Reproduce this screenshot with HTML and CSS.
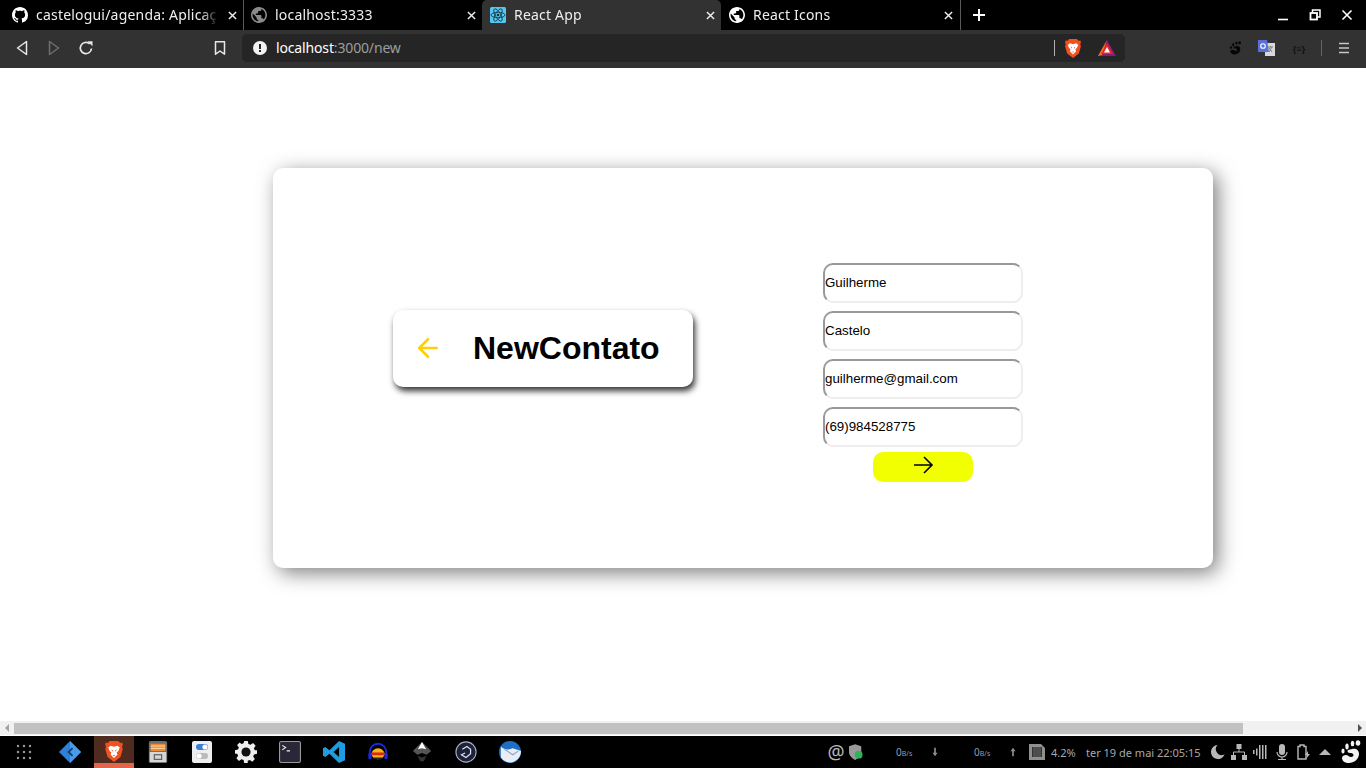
FILE: index.html
```html
<!DOCTYPE html>
<html lang="pt-BR">
<head>
  <meta charset="UTF-8" />
  <meta name="viewport" content="width=device-width, initial-scale=1.0" />
  <title>React App</title>
  <link rel="stylesheet" href="styles.css">
</head>
<body>
  <svg class="defs" width="0" height="0" aria-hidden="true">
    <symbol id="ic-globe" viewBox="2 2 20 20"><path fill="currentColor" d="M12 2C6.48 2 2 6.48 2 12s4.48 10 10 10 10-4.48 10-10S17.52 2 12 2zm-1 17.93c-3.95-.49-7-3.85-7-7.93 0-.62.08-1.21.21-1.79L9 15v1c0 1.1.9 2 2 2v1.93zm6.9-2.54c-.26-.81-1-1.39-1.9-1.39h-1v-3c0-.55-.45-1-1-1H8v-2h2c.55 0 1-.45 1-1V7h2c1.1 0 2-.9 2-2v-.41c2.93 1.19 5 4.06 5 7.41 0 2.08-.8 3.97-2.1 5.39z"/></symbol>
    <symbol id="ic-close" viewBox="0 0 10 10"><path d="M1 1l8 8M9 1l-8 8" stroke="currentColor" stroke-width="1.6" fill="none"/></symbol>
    <symbol id="ic-brave" viewBox="0 0 20 24"><path fill="#f1501f" d="M5 0h10l2 2.200 2.400-.4L20 4l-.8 3 .8 2-2.600 9.400L10 24l-7.400-5.600L0 9l.8-2L0 4l.6-2.200L3 2.200z"/><path fill="#fff" d="M6 5.500l4 1 4-1 2.500 2-1.500 4-2 1.500 1 2.500-4 4-4-4 1-2.500-2-1.500-1.500-4z"/><path fill="#f1501f" d="M7 9.500l2 1.500-1 1zM13 9.500l-2 1.500 1 1zM8.500 16h3L10 17.500z"/></symbol>
    <symbol id="ic-foot" viewBox="0 0 24 24"><path fill="currentColor" d="M14 9c4-1 7 1 7 5 0 5-5 9-10 9-4 0-7-2-7-5 0-2 2-3 4-3 2 0 3 2 5 2 1.500 0 2.500-1 2.500-2 0-1.500-2-2-3.500-2-1.500 0-2.500-1-2.500-2 0-1 2-1.500 4.500-2z"/><ellipse fill="currentColor" cx="5" cy="11" rx="1.600" ry="2.600"/><ellipse fill="currentColor" cx="9" cy="6.500" rx="1.700" ry="2.900"/><ellipse fill="currentColor" cx="14.500" cy="3.500" rx="1.800" ry="2.800"/><ellipse fill="currentColor" cx="20" cy="3" rx="2.300" ry="2.700"/></symbol>
  </svg>

  <header class="tabstrip">
    <div class="tab">
      <svg class="favicon" viewBox="0 0 16 16"><path fill="#fff" d="M8 0C3.58 0 0 3.58 0 8c0 3.54 2.29 6.53 5.47 7.59.4.07.55-.17.55-.38 0-.19-.01-.82-.01-1.490-2.010.37-2.530-.49-2.690-.94-.09-.23-.48-.94-.82-1.130-.28-.15-.68-.52-.01-.53.63-.01 1.080.58 1.230.82.72 1.210 1.870.87 2.330.66.07-.52.28-.87.51-1.070-1.780-.2-3.640-.89-3.640-3.950 0-.87.31-1.590.82-2.150-.08-.2-.36-1.020.08-2.120 0 0 .67-.21 2.200.82.64-.18 1.320-.27 2-.27.68 0 1.360.09 2 .27 1.530-1.040 2.200-.82 2.200-.82.44 1.100.16 1.920.08 2.120.51.56.82 1.270.82 2.150 0 3.070-1.870 3.750-3.650 3.950.29.25.54.73.54 1.480 0 1.070-.01 1.930-.01 2.200 0 .21.15.46.55.38A8.013 8.013 0 0016 8c0-4.420-3.580-8-8-8z"/></svg>
      <span class="tab-title">castelogui/agenda: Aplicaç</span>
      <svg class="tab-close"><use href="#ic-close"/></svg>
    </div>
    <div class="tab">
      <svg class="favicon favicon-dim"><use href="#ic-globe"/></svg>
      <span class="tab-title">localhost:3333</span>
      <svg class="tab-close"><use href="#ic-close"/></svg>
    </div>
    <div class="tab tab-active">
      <svg class="favicon" viewBox="0 0 16 16">
        <rect width="16" height="16" rx="1.500" fill="#55c8f2"/>
        <g fill="none" stroke="#12323f" stroke-width=".8">
          <ellipse cx="8" cy="8" rx="7" ry="2.700"/>
          <ellipse cx="8" cy="8" rx="7" ry="2.700" transform="rotate(60 8 8)"/>
          <ellipse cx="8" cy="8" rx="7" ry="2.700" transform="rotate(120 8 8)"/>
        </g>
        <circle cx="8" cy="8" r="1.300" fill="#12323f"/>
      </svg>
      <span class="tab-title">React App</span>
      <svg class="tab-close"><use href="#ic-close"/></svg>
    </div>
    <div class="tab">
      <svg class="favicon"><use href="#ic-globe"/></svg>
      <span class="tab-title">React Icons</span>
      <svg class="tab-close"><use href="#ic-close"/></svg>
    </div>
    <svg class="new-tab" viewBox="0 0 12 12"><path d="M6 0v12M0 6h12" stroke="#fff" stroke-width="2"/></svg>
    <div class="win-controls">
      <svg viewBox="0 0 12 12"><path d="M1 10.500h10" stroke="#fff" stroke-width="1.600"/></svg>
      <svg viewBox="0 0 12 12"><path d="M3.500 3.500V1h7.500v7H8.500" fill="none" stroke="#fff" stroke-width="1.500"/><rect x="1.500" y="4" width="6.500" height="6.500" fill="none" stroke="#fff" stroke-width="1.800"/></svg>
      <svg viewBox="0 0 12 12"><path d="M1.500 1.500l9 9M10.500 1.500l-9 9" stroke="#fff" stroke-width="1.600"/></svg>
    </div>
  </header>

  <nav class="toolbar">
    <button class="tool-btn"><svg viewBox="0 0 16 16"><path d="M12.500 1.500v13L3.500 8z" fill="none" stroke="#e8e8e8" stroke-width="1.500" stroke-linejoin="round"/></svg></button>
    <button class="tool-btn"><svg viewBox="0 0 16 16"><path d="M3.500 1.500v13L12.500 8z" fill="none" stroke="#6f6f6f" stroke-width="1.500" stroke-linejoin="round"/></svg></button>
    <button class="tool-btn"><svg viewBox="0 0 16 16"><path d="M13.500 8.500A5.600 5.600 0 1 1 11.600 3.800" fill="none" stroke="#e8e8e8" stroke-width="1.700"/><path d="M9.500 1.200h5v5z" fill="#e8e8e8"/></svg></button>
    <button class="tool-btn bookmark-btn"><svg viewBox="0 0 16 16"><path d="M3.500 1.800h9v12.400L8 11l-4.500 3.200z" fill="none" stroke="#e8e8e8" stroke-width="1.500" stroke-linejoin="round"/></svg></button>
    <div class="address-bar">
      <svg class="info-icon" viewBox="0 0 14 14"><circle cx="7" cy="7" r="7" fill="#f2f2f2"/><rect x="6" y="3" width="2" height="5" fill="#252525"/><rect x="6" y="9" width="2" height="2" fill="#252525"/></svg>
      <span class="url"><span class="url-host">localhost</span>:3000/new</span>
      <span class="bar-sep"></span>
      <svg class="shield-icon"><use href="#ic-brave"/></svg>
      <svg class="bat-icon" viewBox="0 0 18 16"><path d="M9 0l9 16H0z" fill="#8a1a78"/><path d="M9 0L0 16l4-1z" fill="#f5701f"/><path d="M9 3.500L15 14H3z" fill="#e8291f"/><path d="M9 7l3 5.500H6z" fill="#fff"/></svg>
    </div>
    <div class="extensions">
      <svg class="ext-foot"><use href="#ic-foot"/></svg>
      <svg class="ext-translate" viewBox="0 0 17 16"><rect x="7" y="3" width="10" height="13" fill="#d8d8d8"/><path d="M10 7h5M12.500 6v1M11 12l3-5M11 8l3 4" stroke="#777" stroke-width=".9" fill="none"/><path d="M0 0h9l2 12H0z" fill="#5b6fd8"/><circle cx="5" cy="6" r="2.300" fill="none" stroke="#fff" stroke-width="1.100"/></svg>
      <span class="ext-var">{≡}</span>
      <span class="bar-sep bar-sep-light"></span>
      <svg class="menu-icon" viewBox="0 0 12 12"><path d="M1 1.500h10M1 6h10M1 10.500h10" stroke="#c8c8c8" stroke-width="1.700"/></svg>
    </div>
  </nav>

  <main class="viewport">
    <section class="card">
      <div class="title-box">
        <svg class="back-arrow" viewBox="0 0 24 24"><path d="M19 12H5M12 19l-7-7 7-7"/></svg>
        <h1 class="page-title">NewContato</h1>
      </div>
      <form class="contact-form">
        <input class="field" type="text" value="Guilherme">
        <input class="field" type="text" value="Castelo">
        <input class="field" type="text" value="guilherme@gmail.com">
        <input class="field" type="text" value="(69)984528775">
        <button class="submit-btn" type="button"><svg viewBox="0 0 24 24"><path d="M3 12h18M13 4l8 8-8 8"/></svg></button>
      </form>
    </section>
  </main>

  <div class="scrollbar">
    <span class="scroll-btn scroll-left"></span>
    <div class="scroll-thumb"></div>
    <span class="scroll-btn scroll-right"></span>
  </div>

  <footer class="taskbar">
    <div class="dock">
      <svg class="dock-grid" viewBox="0 0 16 16" fill="#9a9a9a"><circle cx="2" cy="2" r="1.200"/><circle cx="8" cy="2" r="1.200"/><circle cx="14" cy="2" r="1.200"/><circle cx="2" cy="8" r="1.200"/><circle cx="8" cy="8" r="1.200"/><circle cx="14" cy="8" r="1.200"/><circle cx="2" cy="14" r="1.200"/><circle cx="8" cy="14" r="1.200"/><circle cx="14" cy="14" r="1.200"/></svg>
      <div class="dock-item dock-item-gap"><svg viewBox="0 0 24 24"><path d="M12 0l12 12-12 12L0 12z" fill="#2f7fd6"/><path d="M12 0l12 12-12 12z" fill="#4a9bea"/><path d="M9 12l5-5 1.500 1.500L12 12l3.500 3.500L14 17z" fill="#12406f"/></svg></div>
      <div class="dock-item dock-active"><svg class="dock-brave"><use href="#ic-brave"/></svg></div>
      <div class="dock-item"><svg viewBox="0 0 20 24"><rect width="20" height="24" rx="2" fill="#6e6e6e"/><rect x="2" y="3" width="16" height="8" fill="#f08b35"/><path d="M2 5.500h16M2 8h16" stroke="#fbe0b8"/><rect x="1" y="12" width="18" height="11" fill="#d6d6d6"/><rect x="6" y="15" width="8" height="5" fill="none" stroke="#555" stroke-width="1.200"/></svg></div>
      <div class="dock-item"><svg viewBox="0 0 20 22"><rect width="20" height="22" rx="2" fill="#eee"/><rect x="4" y="3" width="12" height="6" rx="3" fill="#3a7fd6"/><circle cx="13" cy="6" r="2.600" fill="#fff"/><rect x="4" y="12" width="12" height="6" rx="3" fill="#bbb"/><circle cx="7" cy="15" r="2.600" fill="#fff"/></svg></div>
      <div class="dock-item"><svg viewBox="0 0 24 24"><path d="M10 0h4l.6 3.200 2.400 1 2.700-1.900 2.800 2.800-1.900 2.700 1 2.400L24 10v4l-3.200.6-1 2.400 1.900 2.700-2.800 2.800-2.700-1.900-2.400 1L14 24h-4l-.6-3.200-2.400-1-2.700 1.900-2.800-2.800 1.900-2.700-1-2.400L0 14v-4l3.200-.6 1-2.400-1.900-2.700 2.800-2.800L7 3.400l2.400-1z" fill="#eee"/><circle cx="12" cy="12" r="5" fill="#111"/></svg></div>
      <div class="dock-item"><svg viewBox="0 0 20 20"><rect x=".5" y=".5" width="19" height="19" rx="1.500" fill="#2a2838" stroke="#999"/><path d="M3 4l3 2-3 2M7 9h3" stroke="#eee" fill="none"/></svg></div>
      <div class="dock-item"><svg viewBox="0 0 24 24"><path d="M17.500 0L24 3v18l-6.500 3L7 14l-4.500 3.500L0 16V8l2.500-1.500L7 10zM17.500 6.500L11.500 12l6 5.500z" fill="#1f9ce0"/></svg></div>
      <div class="dock-item"><svg viewBox="0 0 24 24"><path d="M3 16V12a9 9 0 0 1 18 0v4" fill="none" stroke="#1a2ae0" stroke-width="2"/><rect x="1.500" y="13" width="3.500" height="7" rx="1.500" fill="#1a2ae0"/><rect x="19" y="13" width="3.500" height="7" rx="1.500" fill="#1a2ae0"/><ellipse cx="12" cy="14" rx="7" ry="6" fill="#f5b40f"/><path d="M5 14h14" stroke="#e2241f" stroke-width="3"/><path d="M7 19h10" stroke="#222" stroke-width="2"/></svg></div>
      <div class="dock-item"><svg viewBox="0 0 24 24"><path d="M12 1l10 10-5 4-5-2-5 2-5-4z" fill="#555"/><path d="M12 1l4.500 8L12 8 7.500 9z" fill="#fff"/><path d="M7 16l5 2 5-2-3 6h-4z" fill="#333"/></svg></div>
      <div class="dock-item"><svg viewBox="0 0 24 24"><circle cx="12" cy="12" r="11" fill="#1c2238" stroke="#aab0c8" stroke-width="1.200"/><path d="M8 9l5-3 4 3v5l-5 4-5-3 4-2" fill="none" stroke="#dfe3f2" stroke-width="1.300"/></svg></div>
      <div class="dock-item"><svg viewBox="0 0 24 24"><circle cx="12" cy="12" r="12" fill="#1e6fc4"/><path d="M2 6c4 4 9 4 13 2l9 3a12 12 0 0 1-22 7z" fill="#e9edf5"/><path d="M6 9l9 6 6-4" fill="none" stroke="#8aa4c8" stroke-width="1.200"/></svg></div>
    </div>
    <div class="tray">
      <span class="tray-at">@</span>
      <svg class="tray-shield" viewBox="0 0 16 18"><path d="M7 0l7 2.500V9c0 4-3 7-7 9-4-2-7-5-7-9V2.500z" fill="#9a9a9a"/><circle cx="11" cy="12" r="4.500" fill="#2fb457"/></svg>
      <span class="tray-speed tray-down">0<small>B/s</small></span>
      <svg class="tray-arrow tray-arrow-down" viewBox="0 0 8 12"><path d="M4 11L1 7h2V1h2v6h2z" fill="#8f8f8f"/></svg>
      <span class="tray-speed tray-up">0<small>B/s</small></span>
      <svg class="tray-arrow tray-arrow-up" viewBox="0 0 8 12"><path d="M4 1l3 4H5v6H3V5H1z" fill="#8f8f8f"/></svg>
      <svg class="tray-chip" viewBox="0 0 16 16"><path d="M0 0h12l4 4v12H0z" fill="#8f8f8f"/><rect x="3" y="3" width="10" height="10" fill="#333"/><path d="M5 3v10M7 3v10M9 3v10M11 3v10" stroke="#8f8f8f" stroke-width=".6"/></svg>
      <span class="tray-text tray-cpu">4.2%</span>
      <span class="tray-text tray-date">ter 19 de mai</span>
      <span class="tray-text tray-time">22:05:15</span>
      <svg class="tray-icon tray-moon" viewBox="0 0 16 16"><path d="M8.500 1a7 7 0 1 0 7 9.500A6 6 0 0 1 8.500 1z" fill="#b8b8b8"/></svg>
      <svg class="tray-icon tray-net" viewBox="0 0 16 16"><path d="M5.500 0h5v5h-5zM0 11h5v5H0zM11 11h5v5h-5z" fill="#b8b8b8"/><path d="M8 5v3M2.500 11V8h11v3" fill="none" stroke="#b8b8b8"/></svg>
      <svg class="tray-icon tray-vol" viewBox="0 0 16 16"><path d="M0 6h1.500v4H0zM3 4.500h1.500v7H3zM6 1h1.500v14H6zM9 1h1.500v14H9zM12 1h1.500v14H12z" fill="#b8b8b8"/></svg>
      <svg class="tray-mic" viewBox="0 0 14 16"><rect x="4" y="0" width="6" height="11" rx="3" fill="#b8b8b8"/><path d="M2 8a5 5 0 0 0 10 0M7 13v2M3 15.500h8" fill="none" stroke="#b8b8b8" stroke-width="1.200"/></svg>
      <svg class="tray-icon tray-batt" viewBox="0 0 16 16"><path d="M3 2.500h2V1h4v1.500h2V15H3z" fill="none" stroke="#b8b8b8" stroke-width="1.400"/><path d="M13 7l-3 4h2l-1 4 4-5h-2z" fill="#b8b8b8"/></svg>
      <svg class="tray-caret" viewBox="0 0 12 6"><path d="M6 0l6 6H0z" fill="#b8b8b8"/></svg>
      <svg class="tray-foot"><use href="#ic-foot"/></svg>
    </div>
  </footer>
</body>
</html>
```

FILE: styles.css
```css
* {
  box-sizing: border-box;
}

html, body {
  margin: 0;
  height: 768px;
  overflow: hidden;
}

body {
  display: flex;
  flex-direction: column;
  background-color: #fff;
  font-family: "Noto Sans", sans-serif;
}

.defs {
  position: absolute;
}

/* tabs */
.tabstrip {
  display: flex;
  align-items: stretch;
  flex: 0 0 30px;
  background-color: #000;
  color: #eee;
}

.tab {
  display: flex;
  align-items: center;
  width: 240px;
  padding: 0 6px 0 8px;
  border-right: 1px solid #5a5a5a;
  font-size: 14px;
}

.tab:nth-child(1) {
  width: 244px;
  padding-left: 12px;
}

.tab:nth-child(2) {
  width: 238px;
  padding-left: 7px;
  border-right: none;
}

.tab-active {
  width: 239px;
  background-color: #323232;
  border-right: none;
  border-radius: 5px 5px 0 0;
}

.favicon {
  flex: 0 0 16px;
  width: 16px;
  height: 16px;
  color: #fff;
}

.favicon-dim {
  color: #8a8a8a;
}

.tab-title {
  flex: 1;
  margin: 0 0 1px 8px;
  overflow: hidden;
  white-space: nowrap;
  letter-spacing: .2px;
  -webkit-mask-image: linear-gradient(to right, #000 165px, transparent 183px);
  mask-image: linear-gradient(to right, #000 165px, transparent 183px);
}

.tab-close {
  flex: 0 0 9px;
  width: 9px;
  height: 9px;
  color: #eee;
}

.tab:nth-child(4) .tab-close {
  margin-right: 1px;
}

.new-tab {
  width: 12px;
  height: 12px;
  margin: 9px 0 0 12px;
}

.win-controls {
  display: flex;
  align-items: center;
  gap: 20px;
  margin-left: auto;
  padding-right: 13px;
}

.win-controls svg {
  width: 12px;
  height: 12px;
}

/* toolbar */
.toolbar {
  display: flex;
  align-items: center;
  flex: 0 0 38px;
  padding: 0 6px 2px;
  background-color: #323232;
}

.tool-btn {
  display: flex;
  align-items: center;
  justify-content: center;
  width: 32px;
  height: 28px;
  padding: 0;
  border: none;
  background: none;
}

.tool-btn svg {
  width: 16px;
  height: 16px;
}

.bookmark-btn {
  margin-left: 102px;
}

.address-bar {
  display: flex;
  align-items: center;
  width: 883px;
  height: 28px;
  margin-left: 6px;
  padding: 0 9px 0 11px;
  border-radius: 5px;
  background-color: #252525;
}

.info-icon {
  width: 14px;
  height: 14px;
}

.url {
  flex: 1;
  margin: 0 0 1px 9px;
  font-size: 14px;
  letter-spacing: -.15px;
  color: #9d9d9d;
}

.url-host {
  color: #fff;
}

.bar-sep {
  width: 1px;
  height: 16px;
  background-color: #b0b0b0;
}

.shield-icon {
  width: 16px;
  height: 19px;
  margin-left: 10px;
}

.bat-icon {
  width: 18px;
  height: 16px;
  margin-left: 17px;
}

.extensions {
  display: flex;
  align-items: center;
  margin-left: auto;
}

.ext-foot {
  width: 14px;
  height: 14px;
  color: #050505;
  margin-right: 16px;
}

.ext-translate {
  width: 17px;
  height: 16px;
}

.ext-var {
  width: 32px;
  margin-left: 8px;
  text-align: center;
  font-size: 9px;
  font-weight: bold;
  color: #111;
}

.bar-sep-light {
  margin-left: 6px;
  background-color: #666;
}

.menu-icon {
  width: 12px;
  height: 12px;
  margin: 0 10px 0 16px;
}

/* page */
.viewport {
  flex: 1;
  min-height: 0;
  padding: 100px 0 0 273px;
  background-color: #fff;
}

.card {
  display: flex;
  align-items: flex-start;
  gap: 130px;
  width: 940px;
  height: 400px;
  padding: 95px 0 0 120px;
  border-radius: 10px;
  background-color: #fff;
  box-shadow: 5px 5px 20px rgba(0, 0, 0, .5);
}

.title-box {
  display: flex;
  align-items: center;
  width: 300px;
  height: 77px;
  margin-top: 47px;
  padding-left: 20px;
  border-radius: 10px;
  background-color: #fff;
  box-shadow: 2px 4px 6px rgba(0, 0, 0, .8);
}

.back-arrow {
  width: 30px;
  height: 30px;
  margin-bottom: 2px;
  fill: none;
  stroke: #ffd000;
  stroke-width: 2;
  stroke-linecap: round;
  stroke-linejoin: round;
}

.page-title {
  margin: 0 0 0 30px;
  font-family: "Liberation Sans", sans-serif;
  font-size: 32px;
  font-weight: bold;
  color: #000;
}

.contact-form {
  display: flex;
  flex-direction: column;
  align-items: center;
  gap: 8px;
  width: 200px;
}

.field {
  width: 200px;
  height: 40px;
  padding: 0 0 2px;
  border: 2px solid;
  border-color: #999 #eee #eee #999;
  border-radius: 10px;
  outline: none;
  background-color: #fff;
  font-family: "Liberation Sans", sans-serif;
  font-size: 13.333px;
  color: #000;
}

.submit-btn {
  display: flex;
  align-items: center;
  justify-content: center;
  width: 100px;
  height: 30px;
  margin-top: -3px;
  padding: 0 0 4px;
  border: none;
  border-radius: 10px;
  background-color: #f2ff00;
}

.submit-btn svg {
  width: 24px;
  height: 24px;
  fill: none;
  stroke: #000;
  stroke-width: 1.600;
}

/* scrollbar */
.scrollbar {
  display: flex;
  align-items: center;
  flex: 0 0 14px;
  background-color: #f1f1f1;
}

.scroll-btn {
  flex: 0 0 15px;
  height: 0;
  border-style: solid;
  border-color: transparent;
}

.scroll-left {
  width: 0;
  flex: 0 0 0;
  margin: 0 10px 0 5px;
  border-width: 4px 4px 4px 0;
  border-right-color: #a3a3a3;
}

.scroll-thumb {
  align-self: flex-start;
  width: 1229px;
  height: 11px;
  margin: 2px 0 0 -5px;
  background-color: #c1c1c1;
}

.scroll-right {
  width: 0;
  flex: 0 0 0;
  margin-left: auto;
  margin-right: 4px;
  border-width: 4px 0 4px 4px;
  border-left-color: #505050;
}

/* desktop bar */
.taskbar {
  display: flex;
  align-items: center;
  flex: 0 0 33px;
  border-top: 1px solid #fff;
  background-color: #000;
}

.dock {
  display: flex;
  align-items: center;
  height: 32px;
  padding-left: 2px;
}

.dock-grid {
  width: 16px;
  height: 16px;
  margin: 0 14px;
}

.dock-item {
  display: flex;
  align-items: center;
  justify-content: center;
  width: 44px;
  height: 32px;
}

.dock-item svg {
  width: 22px;
  height: 22px;
}

.dock-item-gap {
  margin-left: 2px;
}

.dock-active {
  width: 40px;
  margin: 0 2px;
  padding-top: 4px;
  border-bottom: 5px solid #e0654a;
  background-color: #4f2a1e;
}

.dock-item .dock-brave {
  width: 18px;
  height: 21px;
}

.tray {
  display: flex;
  align-items: center;
  height: 32px;
  margin-left: auto;
  padding-right: 4px;
  color: #a8a8a8;
  font-size: 11px;
}

.tray svg {
  flex: none;
}

.tray-at {
  width: 20px;
  font-size: 19px;
  line-height: 1;
  text-align: center;
  color: #b8b8b8;
}

.tray-shield {
  width: 14px;
  height: 16px;
  margin: 0 3px;
}

.tray-speed {
  width: 18px;
  font-size: 10px;
  color: #8f9bb5;
}

.tray-speed small {
  font-size: 7px;
}

.tray-down {
  margin-left: 30px;
}

.tray-arrow {
  width: 8px;
  height: 10px;
}

.tray-arrow-down {
  margin: 0 2px 0 17px;
}

.tray-up {
  margin-left: 33px;
}

.tray-arrow-up {
  margin: 0 1px 0 17px;
}

.tray-chip {
  width: 16px;
  height: 16px;
  margin-left: 11px;
}

.tray-text {
  white-space: nowrap;
}

.tray-cpu {
  width: 26px;
  margin-left: 6px;
}

.tray-date {
  width: 66px;
  margin-left: 9px;
}

.tray-time {
  width: 43px;
  margin-left: 5px;
}

.tray-icon {
  width: 16px;
  height: 16px;
  margin-left: 6px;
}

.tray-moon {
  margin-left: 9px;
}

.tray-mic {
  width: 14px;
  height: 16px;
  margin-left: 6px;
}

.tray-caret {
  width: 12px;
  height: 6px;
  margin-left: 8px;
}

.tray-foot {
  width: 24px;
  height: 24px;
  margin-left: 7px;
  color: #f4f4f4;
}
```
